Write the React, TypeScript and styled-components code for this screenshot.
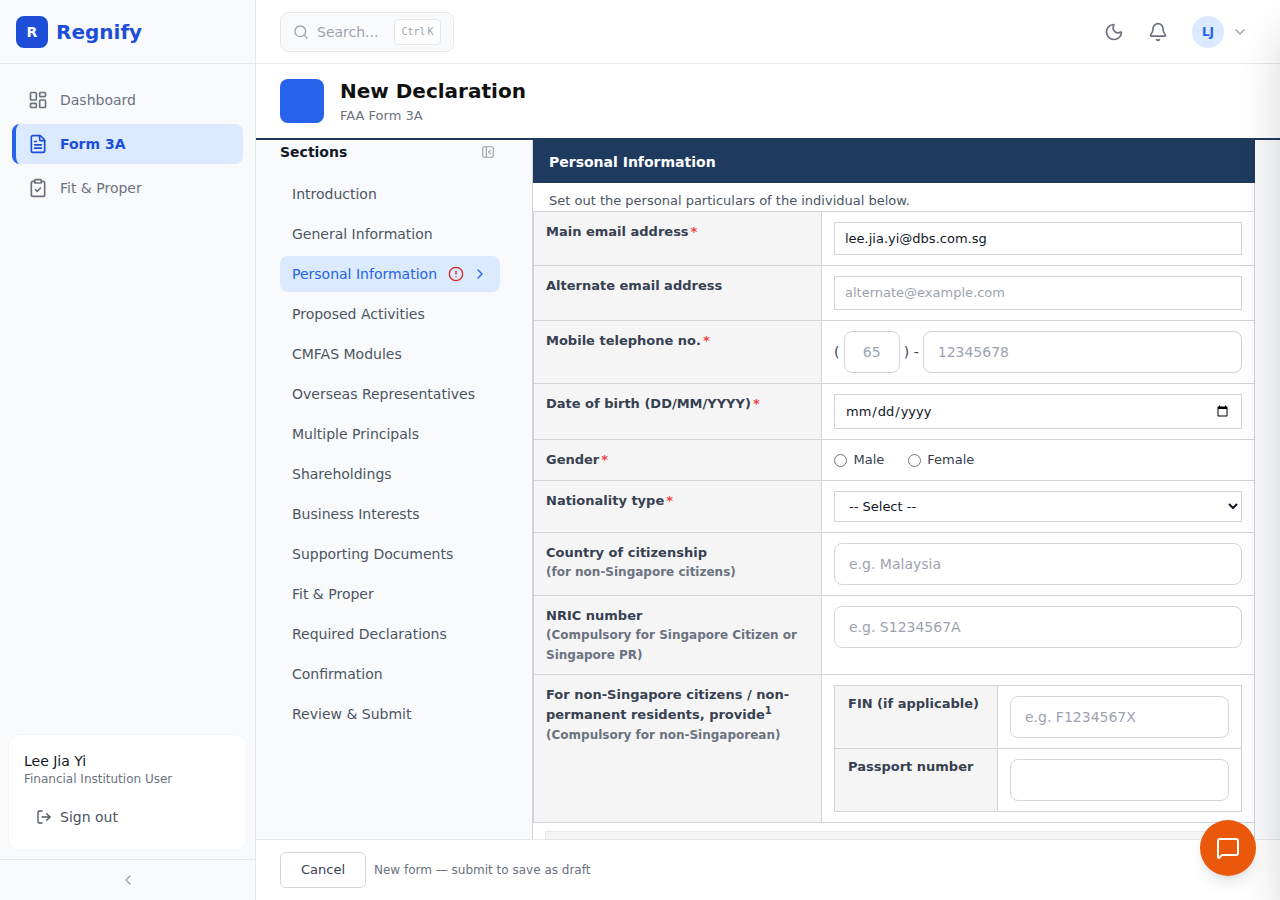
import React from 'react';
import styled, { createGlobalStyle } from 'styled-components';
import {
  Search, Moon, Bell, ChevronDown, LayoutDashboard, FileText, ClipboardCheck,
  LogOut, ChevronLeft, ChevronRight, CircleAlert, MessageSquare, PanelLeftClose,
} from 'lucide-react';

const Global = createGlobalStyle`
  html, body { margin: 0; padding: 0; height: 100%; overflow: hidden; }
  body { font-family: "DejaVu Sans", sans-serif; background: #f9fafb; color: #111827; }
  * { box-sizing: border-box; }
`;

const Shell = styled.div`display: flex; height: 900px; width: 1280px; overflow: hidden; position: relative;`;

const Sidebar = styled.aside`
  width: 256px; flex: none; display: flex; flex-direction: column;
  background: #f9fafb; border-right: 1px solid #e5e7eb;
`;
const Brand = styled.div`
  height: 64px; flex: none; display: flex; align-items: center; gap: 8px; padding: 0 16px;
  border-bottom: 1px solid #e5e7eb;
`;
const BrandMark = styled.div`
  width: 32px; height: 32px; border-radius: 8px; background: #1d4ed8; color: #fff;
  display: flex; align-items: center; justify-content: center; font-size: 14px; font-weight: 700;
`;
const BrandName = styled.span`font-size: 20px; font-weight: 700; color: #1d4ed8;`;
const Nav = styled.nav`flex: 1; display: flex; flex-direction: column; gap: 4px; padding: 16px 12px;`;
const NavItem = styled.a<{ $active?: boolean }>`
  height: 40px; display: flex; align-items: center; gap: 12px; border-radius: 8px; font-size: 14px;
  padding-left: ${p => (p.$active ? 12 : 16)}px;
  border-left: ${p => (p.$active ? '4px solid #2563eb' : 'none')};
  background: ${p => (p.$active ? '#dbeafe' : 'transparent')};
  color: ${p => (p.$active ? '#1d4ed8' : '#6b7280')};
  font-weight: ${p => (p.$active ? 700 : 400)};
`;
const UserCard = styled.div`
  margin: 0 8px 8px; height: 117px; padding: 16px 15px; background: #fff;
  border: 1px solid #f3f4f6; border-radius: 12px; display: flex; flex-direction: column;
`;
const UserName = styled.div`font-size: 14px; line-height: 20px; color: #111827;`;
const UserRole = styled.div`font-size: 12px; line-height: 16px; color: #6b7280;`;
const SignOut = styled.div`
  display: flex; align-items: center; gap: 8px; margin-top: 20px; padding-left: 12px;
  font-size: 14px; line-height: 20px; color: #4b5563;
`;
const Collapse = styled.div`
  height: 41px; flex: none; border-top: 1px solid #e5e7eb; display: flex;
  align-items: center; justify-content: center; color: #9ca3af;
`;

const Main = styled.div`flex: 1; min-width: 0; display: flex; flex-direction: column;`;
const Topbar = styled.header`
  height: 64px; flex: none; display: flex; align-items: center; justify-content: space-between;
  padding: 0 32px 0 24px; background: #fff; border-bottom: 1px solid #e5e7eb;
`;
const SearchBox = styled.div`
  width: 174px; height: 40px; display: flex; align-items: center; gap: 8px; padding: 0 12px;
  background: #f9fafb; border: 1px solid #e5e7eb; border-radius: 8px; color: #9ca3af; font-size: 14px;
`;
const SearchText = styled.span`flex: 1;`;
const Kbd = styled.kbd`
  width: 47px; height: 26px; display: flex; align-items: center; justify-content: center; gap: 2px;
  background: #fff; border: 1px solid #e5e7eb; border-radius: 4px;
  font-family: "DejaVu Sans Mono", monospace; font-size: 10px; color: #9ca3af;
`;
const TopActions = styled.div`display: flex; align-items: center; color: #6b7280;`;
const TopIcon = styled.span`width: 20px; height: 20px; display: flex; margin-right: 24px;`;
const Avatar = styled.div`
  width: 32px; height: 32px; border-radius: 50%; background: #dbeafe; color: #2563eb;
  display: flex; align-items: center; justify-content: center; font-size: 12px; font-weight: 700;
  margin-right: 8px;
`;
const PageHead = styled.div`
  height: 76px; flex: none; display: flex; align-items: center; gap: 16px; padding: 0 24px;
  background: #fff; border-bottom: 2px solid #1e3a5f;
`;
const PageMark = styled.div`width: 44px; height: 44px; border-radius: 8px; background: #2563eb;`;
const PageTitle = styled.h1`margin: 0; font-size: 20px; line-height: 28px; font-weight: 700; color: #111111;`;
const PageSub = styled.div`font-size: 13px; line-height: 20px; margin-top: 1px; color: #6b7280;`;

const Body = styled.div`flex: 1; min-height: 0; display: flex; overflow: hidden;`;
const Sections = styled.div`width: 277px; flex: none; padding: 2px 32px 0 24px; border-right: 1px solid #d1d5db;`;
const SectionsHead = styled.div`
  display: flex; align-items: center; justify-content: space-between; height: 20px;
  font-size: 14px; font-weight: 700; color: #111827; padding-right: 5px; margin-bottom: 14px;
`;
const SectionsIcon = styled.span`display: flex; color: #9ca3af;`;
const SectionList = styled.div`display: flex; flex-direction: column; gap: 4px;`;
const SectionItem = styled.div<{ $active?: boolean }>`
  height: 36px; display: flex; align-items: center; padding: 0 12px; border-radius: 8px; font-size: 14px;
  background: ${p => (p.$active ? '#dbeafe' : 'transparent')};
  color: ${p => (p.$active ? '#2563eb' : '#4b5563')};
`;
const SectionLabel = styled.span`white-space: nowrap;`;
const SectionAlert = styled.span`display: flex; margin-left: 11px; color: #dc2626;`;
const SectionArrow = styled.span`display: flex; margin-left: 8px; color: #2563eb;`;

const FormPanel = styled.div`width: 722px; flex: none; background: #fff; border-right: 1px solid #d1d5db;`;
const FormBand = styled.div`
  height: 43px; display: flex; align-items: center; padding: 0 16px; background: #1e3a5f; color: #fff;
  font-size: 14px; font-weight: 700; margin-right: -1px;
`;
const FormIntro = styled.p`margin: 0; padding: 10px 16px 3px; font-size: 13px; line-height: 15px; color: #4b5563;`;
const Table = styled.table`width: 722px; table-layout: fixed; border-collapse: collapse; border: 1px solid #d1d5db;`;
const Row = styled.tr``;
const LabelCell = styled.td<{ $w?: number }>`
  width: ${p => p.$w ?? 288}px; background: #f5f5f5; border: 1px solid #d1d5db; padding: 10px 12px;
  vertical-align: top; font-size: 13px; line-height: 19.5px; font-weight: 700; color: #374151;
`;
const NestedLabel = styled(LabelCell)`padding: 8px 12px 10px 13px;`;
const ValueCell = styled.td`border: 1px solid #d1d5db; padding: 10px 12px; vertical-align: top; background: #fff;`;
const Req = styled.span`color: #ef4444; margin-left: 2px;`;
const Hint = styled.span`display: block; margin: -0.4px 0 -1.3px; font-size: 12px; line-height: 20px; color: #6b7280;`;
const Sup = styled.sup`font-size: 10px; line-height: 1.3;`;
const Field = styled.input<{ $h: number; $lift?: boolean }>`
  display: block; width: 100%; height: ${p => p.$h}px; padding: 0 10px ${p => (p.$lift ? 2 : 0)}px;
  border: 1px solid #d1d5db;
  border-radius: 0; background: #fff; font-family: inherit; font-size: 13px; color: #111827; outline: none;
  &::placeholder { color: #9ca3af; }
`;
const RoundField = styled.input<{ $w?: number; $center?: boolean }>`
  display: block; width: ${p => (p.$w ? `${p.$w}px` : '100%')}; height: 42px; flex: ${p => (p.$w ? 'none' : 1)};
  min-width: 0; padding: 0 14px; border: 1px solid #d1d5db; border-radius: 8px; background: #fff;
  font-family: inherit; font-size: 14px; color: #111827; outline: none;
  text-align: ${p => (p.$center ? 'center' : 'left')};
  margin-left: ${p => (p.$center ? 0.3 : 0)}px;
  &::placeholder { color: #9ca3af; }
`;
const PhoneRow = styled.div`display: flex; align-items: center; gap: 4px; font-size: 14px; color: #374151;`;
const Select = styled.select`
  display: block; width: 100%; height: 31px; padding: 0 10px; border: 1px solid #d1d5db; border-radius: 0;
  background: #fff; font-family: inherit; font-size: 13px; color: #111827; outline: none;
`;
const RadioRow = styled.div`display: flex; align-items: center; height: 20px; gap: 23.5px;`;
const RadioLabel = styled.label`display: flex; align-items: center; gap: 6.5px; font-size: 13px; color: #374151;`;
const RadioText = styled.span`margin-bottom: 2px;`;
const Radio = styled.input`margin: 0; width: 13px; height: 13px;`;
const NestedTable = styled.table`width: 100%; table-layout: fixed; border-collapse: collapse;`;
const NextStrip = styled.div`height: 20px; margin: 8px 12px 0; background: #f5f5f5; border: 1px solid #e5e7eb;`;

const Footer = styled.footer`
  height: 61px; flex: none; display: flex; align-items: center; gap: 8px; padding: 0 24px;
  background: #fff; border-top: 1px solid #e5e7eb;
`;
const CancelButton = styled.button`
  width: 86px; height: 36px; padding: 0 0 2px; background: #fff; border: 1px solid #d1d5db; border-radius: 6px;
  font-family: inherit; font-size: 13px; color: #374151;
`;
const FooterNote = styled.span`font-size: 12px; color: #6b7280;`;
const Fab = styled.button`
  position: absolute; left: 1200px; top: 820px; width: 56px; height: 56px; border: none; border-radius: 50%;
  background: #ea580c; color: #fff; display: flex; align-items: center; justify-content: center; padding: 0;
  box-shadow: 0 10px 15px -3px rgba(0,0,0,.1), 0 4px 6px -4px rgba(0,0,0,.1);
`;
const DrawerShadow = styled.div`
  position: absolute; top: 0; left: 1280px; width: 400px; height: 900px; background: #fff;
  box-shadow: 0 25px 50px -12px rgba(0,0,0,.25);
`;

const sections = [
  'Introduction', 'General Information', 'Personal Information', 'Proposed Activities', 'CMFAS Modules',
  'Overseas Representatives', 'Multiple Principals', 'Shareholdings', 'Business Interests',
  'Supporting Documents', 'Fit & Proper', 'Required Declarations', 'Confirmation', 'Review & Submit',
];

export default function App() {
  return (
    <Shell>
      <Global />
      <Sidebar>
        <Brand>
          <BrandMark>R</BrandMark>
          <BrandName>Regnify</BrandName>
        </Brand>
        <Nav>
          <NavItem><LayoutDashboard size={20} strokeWidth={2} />Dashboard</NavItem>
          <NavItem $active><FileText size={20} strokeWidth={2} />Form 3A</NavItem>
          <NavItem><ClipboardCheck size={20} strokeWidth={2} />Fit &amp; Proper</NavItem>
        </Nav>
        <UserCard>
          <UserName>Lee Jia Yi</UserName>
          <UserRole>Financial Institution User</UserRole>
          <SignOut><LogOut size={16} />Sign out</SignOut>
        </UserCard>
        <Collapse><ChevronLeft size={16} /></Collapse>
      </Sidebar>
      <Main>
        <Topbar>
          <SearchBox>
            <Search size={16} />
            <SearchText>Search...</SearchText>
            <Kbd><span>Ctrl</span><span>K</span></Kbd>
          </SearchBox>
          <TopActions>
            <TopIcon><Moon size={20} /></TopIcon>
            <TopIcon><Bell size={20} /></TopIcon>
            <Avatar>LJ</Avatar>
            <ChevronDown size={16} color="#9ca3af" />
          </TopActions>
        </Topbar>
        <PageHead>
          <PageMark />
          <div>
            <PageTitle>New Declaration</PageTitle>
            <PageSub>FAA Form 3A</PageSub>
          </div>
        </PageHead>
        <Body>
          <Sections>
            <SectionsHead>
              Sections
              <SectionsIcon><PanelLeftClose size={14} /></SectionsIcon>
            </SectionsHead>
            <SectionList>
              {sections.map(s => (
                <SectionItem key={s} $active={s === 'Personal Information'}>
                  <SectionLabel>{s}</SectionLabel>
                  {s === 'Personal Information' && (
                    <>
                      <SectionAlert><CircleAlert size={16} /></SectionAlert>
                      <SectionArrow><ChevronRight size={16} /></SectionArrow>
                    </>
                  )}
                </SectionItem>
              ))}
            </SectionList>
          </Sections>
          <FormPanel>
            <FormBand>Personal Information</FormBand>
            <FormIntro>Set out the personal particulars of the individual below.</FormIntro>
            <Table>
              <tbody>
                <Row>
                  <LabelCell>Main email address<Req>*</Req></LabelCell>
                  <ValueCell><Field $h={33} defaultValue="lee.jia.yi@dbs.com.sg" /></ValueCell>
                </Row>
                <Row>
                  <LabelCell>Alternate email address</LabelCell>
                  <ValueCell><Field $h={34} $lift placeholder="alternate@example.com" /></ValueCell>
                </Row>
                <Row>
                  <LabelCell>Mobile telephone no.<Req>*</Req></LabelCell>
                  <ValueCell>
                    <PhoneRow>
                      ( <RoundField $w={56} $center placeholder="65" /> ) - <RoundField placeholder="12345678" />
                    </PhoneRow>
                  </ValueCell>
                </Row>
                <Row>
                  <LabelCell>Date of birth (DD/MM/YYYY)<Req>*</Req></LabelCell>
                  <ValueCell><Field $h={35} type="date" /></ValueCell>
                </Row>
                <Row>
                  <LabelCell>Gender<Req>*</Req></LabelCell>
                  <ValueCell>
                    <RadioRow>
                      <RadioLabel><Radio type="radio" name="gender" /><RadioText>Male</RadioText></RadioLabel>
                      <RadioLabel><Radio type="radio" name="gender" /><RadioText>Female</RadioText></RadioLabel>
                    </RadioRow>
                  </ValueCell>
                </Row>
                <Row>
                  <LabelCell>Nationality type<Req>*</Req></LabelCell>
                  <ValueCell>
                    <Select defaultValue=""><option value="">-- Select --</option></Select>
                  </ValueCell>
                </Row>
                <Row>
                  <LabelCell>Country of citizenship<Hint>(for non-Singapore citizens)</Hint></LabelCell>
                  <ValueCell><RoundField placeholder="e.g. Malaysia" /></ValueCell>
                </Row>
                <Row>
                  <LabelCell>NRIC number<Hint>(Compulsory for Singapore Citizen or Singapore PR)</Hint></LabelCell>
                  <ValueCell><RoundField placeholder="e.g. S1234567A" /></ValueCell>
                </Row>
                <Row>
                  <LabelCell>
                    For non-Singapore citizens / non-permanent residents, provide<Sup>1</Sup>
                    <Hint>(Compulsory for non-Singaporean)</Hint>
                  </LabelCell>
                  <ValueCell>
                    <NestedTable>
                      <tbody>
                        <Row>
                          <NestedLabel $w={163}>FIN (if applicable)</NestedLabel>
                          <ValueCell><RoundField placeholder="e.g. F1234567X" /></ValueCell>
                        </Row>
                        <Row>
                          <NestedLabel $w={163}>Passport number</NestedLabel>
                          <ValueCell><RoundField /></ValueCell>
                        </Row>
                      </tbody>
                    </NestedTable>
                  </ValueCell>
                </Row>
              </tbody>
            </Table>
            <NextStrip />
          </FormPanel>
        </Body>
        <Footer>
          <CancelButton>Cancel</CancelButton>
          <FooterNote>New form — submit to save as draft</FooterNote>
        </Footer>
      </Main>
      <DrawerShadow />
      <Fab><MessageSquare size={24} /></Fab>
    </Shell>
  );
}
